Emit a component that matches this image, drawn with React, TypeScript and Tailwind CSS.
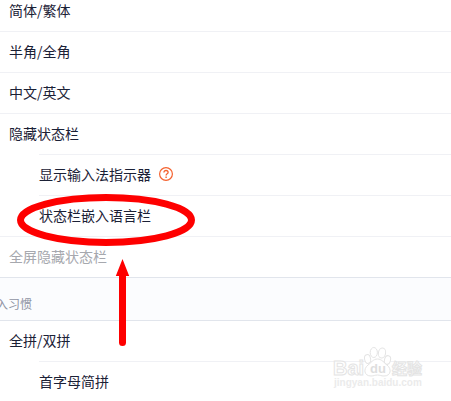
import { ReactNode } from "react";
import clsx from "clsx";

type SettingRowProps = {
  label: string;
  nested?: boolean;
  disabled?: boolean;
  divider?: boolean;
  children?: ReactNode;
};

const SettingRow = ({
  label,
  nested,
  disabled,
  divider = true,
  children,
}: SettingRowProps) => {
  return (
    <li
      className={clsx(
        "flex items-center gap-2 pb-0.5 text-sm",
        nested ? "ml-[39px]" : "pl-[9px]",
        divider ? "h-[41px] border-t border-[#f0f1f5]" : "h-10",
        disabled ? "text-[#a6a8ae]" : "text-[#1b2136]"
      )}
    >
      <span>{label}</span>
      {children}
    </li>
  );
};

const HelpButton = () => (
  <button type="button" aria-label="帮助" className="text-[#f4622f]">
    <svg width="14" height="14" viewBox="0 0 14 14" fill="none">
      <circle cx="7" cy="7" r="6.4" stroke="currentColor" strokeWidth="1.2" />
      <path
        d="M4.9 5.6C4.9 4.3 5.8 3.5 7 3.5s2.1.8 2.1 1.9c0 1.4-2 1.5-2 3.1"
        stroke="currentColor"
        strokeWidth="1.3"
      />
      <path d="M6.4 9.5h1.4v1.4H6.4z" fill="currentColor" />
    </svg>
  </button>
);

const Highlight = () => (
  <svg
    className="pointer-events-none absolute left-[17px] top-[194px]"
    width="178"
    height="153"
    viewBox="0 0 178 153"
    aria-hidden="true"
  >
    <ellipse
      cx="89"
      cy="26"
      rx="85.5"
      ry="22.5"
      fill="none"
      stroke="#fe0000"
      strokeWidth="7"
    />
    <path
      d="M105.5 65 112.2 82H109V148.5a3.5 3.5 0 0 1-7 0V82H98.8z"
      fill="#fe0000"
    />
  </svg>
);

const Watermark = () => (
  <svg
    className="pointer-events-none absolute left-[330px] top-[344px] font-['Liberation_Sans','Noto_Sans_CJK_SC',sans-serif]"
    width="98"
    height="50"
    viewBox="0 0 98 50"
    aria-hidden="true"
  >
    <g fill="#ffffff" stroke="#e4e4e4" strokeWidth="1">
      <text x="3" y="31" fontSize="20" fontWeight="700">
        Bai
      </text>
      <ellipse cx="37.6" cy="15" rx="3" ry="4.4" transform="rotate(-12 37.6 15)" />
      <ellipse cx="43.8" cy="8.5" rx="3.6" ry="5" />
      <ellipse cx="52" cy="9" rx="3.6" ry="5" transform="rotate(10 52 9)" />
      <ellipse cx="57.5" cy="16" rx="3" ry="4.4" transform="rotate(14 57.5 16)" />
      <path d="M47.5 15C52 15 54 19 57 21C62 25 61 32 54 32C51 32 50 31 47.5 31C45 31 44 32 41 32C34 32 33 25 38 21C41 19 43 15 47.5 15z" />
      <text x="62" y="30" fontSize="15" fontWeight="700">
        经验
      </text>
    </g>
    <text x="40" y="29" fontSize="13" fontWeight="700" fill="#dedede">
      du
    </text>
    <text x="4" y="42" fontSize="10" fontWeight="700" fill="#ebebeb">
      jingyan.baidu.com
    </text>
  </svg>
);

export default function App() {
  return (
    <main className="relative h-screen overflow-hidden bg-white font-['Noto_Sans_CJK_SC',sans-serif]">
      <ul className="-mt-[10px]">
        <SettingRow label="简体/繁体" />
        <SettingRow label="半角/全角" />
        <SettingRow label="中文/英文" />
        <SettingRow label="隐藏状态栏" />
        <SettingRow label="显示输入法指示器" nested>
          <HelpButton />
        </SettingRow>
        <SettingRow label="状态栏嵌入语言栏" nested />
        <SettingRow label="全屏隐藏状态栏" disabled />
      </ul>
      <h2 className="flex h-11 items-center border-y border-[#e1e5ec] bg-[#fbfcfe] pt-2.5 text-xs text-[#8f93a3]">
        <span className="-ml-1">入习惯</span>
      </h2>
      <ul>
        <SettingRow label="全拼/双拼" divider={false} />
        <SettingRow label="首字母简拼" nested />
      </ul>
      <Highlight />
      <Watermark />
    </main>
  );
}
